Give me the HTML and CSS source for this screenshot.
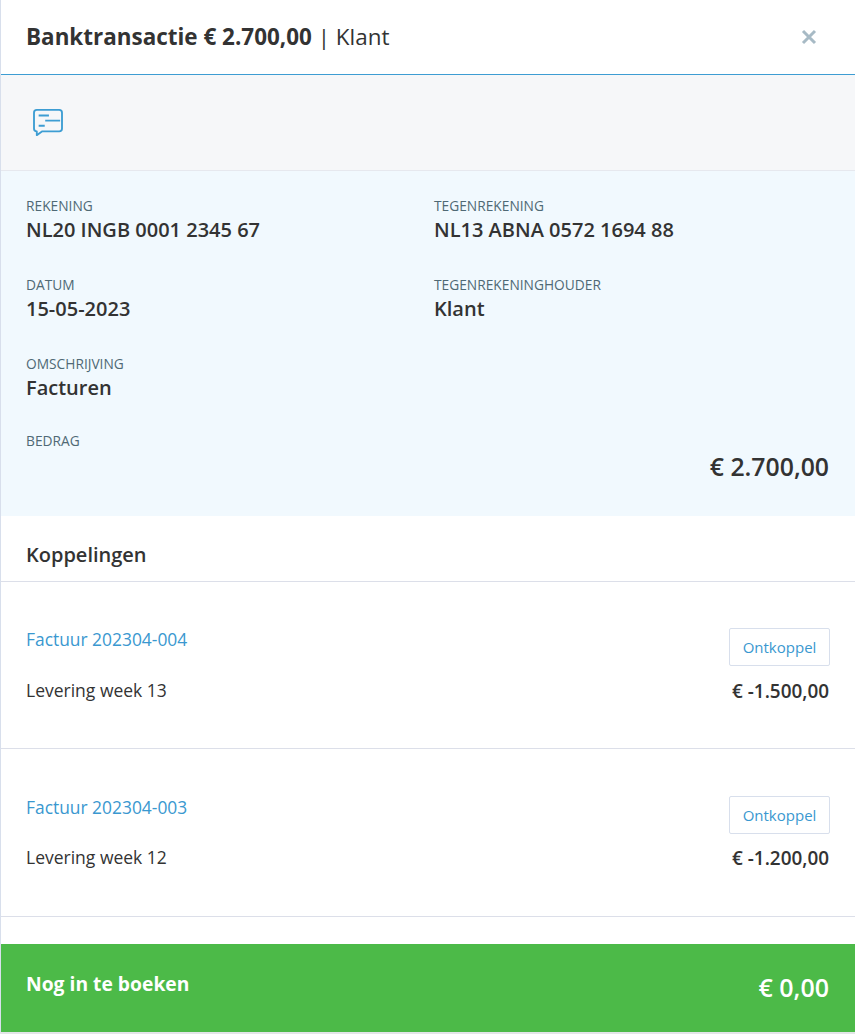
FILE: index.html
```html
<!DOCTYPE html>
<html lang="nl">
<head>
<meta charset="utf-8">
<title>Banktransactie</title>
<link rel="stylesheet" href="styles.css">
</head>
<body>
<div class="panel">
  <header class="head">
    <h1 class="title"><strong>Banktransactie € 2.700,00</strong> | Klant</h1>
    <svg class="close" width="16" height="16" viewBox="0 0 16 16" aria-hidden="true"><path d="M2 2 L14 14 M14 2 L2 14" fill="none" stroke="#a7bac5" stroke-width="3"/></svg>
  </header>
  <div class="toolbar">
    <svg class="note" width="32" height="30" viewBox="0 0 32 30" aria-hidden="true">
      <path d="M4 1h24a3 3 0 0 1 3 3v17a3 3 0 0 1-3 3H9.500l-5.500 4v-4a3 3 0 0 1-3-3V4a3 3 0 0 1 3-3z" fill="none" stroke="#3d9dd3" stroke-width="2" stroke-linejoin="round"/>
      <path d="M6 7h11M13 12.500h16M6 18h6.500" fill="none" stroke="#3d9dd3" stroke-width="2"/>
    </svg>
  </div>
  <section class="info">
    <div class="grid">
      <div class="field"><div class="label">REKENING</div><div class="value">NL20 INGB 0001 2345 67</div></div>
      <div class="field"><div class="label">TEGENREKENING</div><div class="value">NL13 ABNA 0572 1694 88</div></div>
      <div class="field"><div class="label">DATUM</div><div class="value">15-05-2023</div></div>
      <div class="field"><div class="label">TEGENREKENINGHOUDER</div><div class="value">Klant</div></div>
      <div class="field"><div class="label">OMSCHRIJVING</div><div class="value">Facturen</div></div>
    </div>
    <div class="label label-amount">BEDRAG</div>
    <div class="amount">€ 2.700,00</div>
  </section>
  <h2 class="subhead">Koppelingen</h2>
  <div class="row row-first">
    <div class="row-top"><a class="link" href="#">Factuur 202304-004</a><button class="btn" type="button">Ontkoppel</button></div>
    <div class="row-bottom"><span class="desc">Levering week 13</span><span class="sum">€ -1.500,00</span></div>
  </div>
  <div class="row">
    <div class="row-top"><a class="link" href="#">Factuur 202304-003</a><button class="btn" type="button">Ontkoppel</button></div>
    <div class="row-bottom"><span class="desc">Levering week 12</span><span class="sum">€ -1.200,00</span></div>
  </div>
  <footer class="total"><span class="total-label">Nog in te boeken</span><span class="total-sum">€ 0,00</span></footer>
</div>
</body>
</html>
```
FILE: styles.css
```css
* { box-sizing: border-box; }
html, body { margin: 0; padding: 0; }
body {
  background: #e3e5e8;
  font-family: "Open Sans", "Liberation Sans", sans-serif;
  color: #333;
  height: 1034px;
  overflow: hidden;
}
.panel {
  width: 855px;
  height: 1032px;
  background: #fff;
  border-left: 1px solid #d8dfec;
}
.head {
  height: 75px;
  border-bottom: 1px solid #3d9dd3;
  padding: 0 38px 0 25px;
  display: flex;
  align-items: center;
  justify-content: space-between;
}
.title { margin: 0; font-size: 22.45px; font-weight: 400; line-height: 30px; }
.title strong { font-weight: 700; }
.close { margin-top: 0; }
.toolbar {
  height: 96px;
  background: #f6f7f9;
  border-bottom: 1px solid #e6e8ee;
  padding: 34px 0 0 32px;
}
.note { display: block; width: 30px; height: 28px; }
.info {
  height: 345px;
  background: #f1f9fe;
  padding: 27px 25px 0;
}
.grid { display: grid; grid-template-columns: 408px 1fr; row-gap: 32px; }
.field { height: 47px; }
.label { font-size: 13.75px; line-height: 16px; color: #4f6975; }
.value { font-size: 20px; font-weight: 600; line-height: 31px; }
.label-amount { margin-top: 30px; }
.amount { margin: 1px 1px 0 0; font-size: 24.8px; font-weight: 600; line-height: 33px; text-align: right; }
.subhead {
  margin: 0;
  height: 66px;
  padding: 22px 25px 0;
  font-size: 20px;
  font-weight: 600;
  line-height: 34px;
  border-bottom: 1px solid #dcdfe9;
}
.row {
  height: 168px;
  padding: 47px 25px 0;
  border-bottom: 1px solid #dcdfe9;
}
.row-first { height: 167px; padding-top: 46px; }
.row-top { display: flex; justify-content: space-between; align-items: flex-start; }
.link { font-size: 17.4px; line-height: 24px; color: #3a98d0; text-decoration: none; margin-top: -1px; }
.btn {
  width: 101px;
  height: 38px;
  background: #fff;
  border: 1px solid #d8dfec;
  border-radius: 2px;
  color: #3a98d0;
  font: 400 15px/22px "Open Sans", "Liberation Sans", sans-serif;
  padding: 0;
}
.row-bottom {
  display: flex;
  justify-content: space-between;
  align-items: center;
  margin-top: 12px;
  font-size: 17.5px;
  line-height: 24px;
}
.row-first .row-bottom { margin-top: 13px; }
.desc { margin-top: -2px; }
.sum { font-size: 18.9px; font-weight: 600; margin-right: 1px; }
.total {
  margin-top: 27px;
  height: 88px;
  background: #4cba48;
  color: #fff;
  padding: 0 26px 8px 25px;
  display: flex;
  justify-content: space-between;
  align-items: center;
}
.total-label { font-size: 19.3px; font-weight: 700; line-height: 28px; }
.total-sum { font-size: 25px; font-weight: 600; line-height: 36px; margin-top: 6px; }
```
